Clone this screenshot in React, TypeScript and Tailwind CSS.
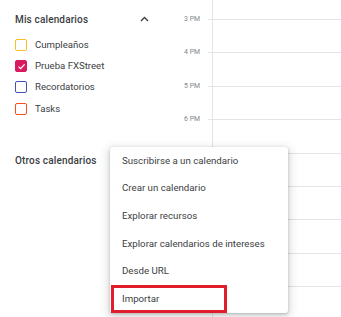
import React from "react";

const calendars = [
  { name: "Cumpleaños", color: "border-[#f6bf26]", checked: false },
  { name: "Prueba FXStreet", color: "border-[#d81b60] bg-[#d81b60]", checked: true },
  { name: "Recordatorios", color: "border-[#3f51b5]", checked: false },
  { name: "Tasks", color: "border-[#f4511e]", checked: false },
];

const hours = ["3 PM", "4 PM", "5 PM", "6 PM", "", "", "", "", ""];

const menuItems = [
  "Suscribirse a un calendario",
  "Crear un calendario",
  "Explorar recursos",
  "Explorar calendarios de intereses",
  "Desde URL",
  "Importar",
];

export default function App() {
  return (
    <div className="relative w-[341px] h-[317px] overflow-hidden bg-white font-['Roboto',sans-serif] text-[#3c4043]">
      <div className="flex h-full">
        {/* Sidebar */}
        <div className="w-[170px] shrink-0 flex flex-col">
          <div className="flex items-center h-[34px] pt-[4px] pl-[15px] pr-[20px]">
            <span className="flex-1 text-[10px] font-medium tracking-[0.15px]">Mis calendarios</span>
            <svg width="9" height="6" viewBox="0 0 9 6" className="mr-[1px]">
              <path d="M1 5 L4.5 1.5 L8 5" fill="none" stroke="#3c4043" strokeWidth="1.4" />
            </svg>
          </div>
          <div className="flex flex-col">
            {calendars.map((c) => (
              <div key={c.name} className="flex items-center h-[21.4px] pl-[15px]">
                <div
                  className={`w-[12px] h-[12px] rounded-[2px] border-[1.5px] flex items-center justify-center ${c.color}`}
                >
                  {c.checked && (
                    <svg width="9" height="9" viewBox="0 0 9 9">
                      <path d="M1.5 4.6 L3.6 6.6 L7.6 2.4" fill="none" stroke="white" strokeWidth="1.3" />
                    </svg>
                  )}
                </div>
                <span className="ml-[8px] text-[9.6px]">{c.name}</span>
              </div>
            ))}
          </div>
          <div className="flex items-center h-[28px] mt-[27.4px] pl-[15px]">
            <span className="text-[10px] font-medium tracking-[0.15px]">Otros calendarios</span>
          </div>
        </div>

        {/* Calendar grid */}
        <div className="flex-1 flex flex-col">
          <div className="flex h-[19px] shrink-0">
            <div className="w-[42px] shrink-0" />
            <div className="flex-1 border-l border-[#e3e4e6]" />
          </div>
          {hours.map((h, i) => (
            <div key={i} className="flex h-[33.4px] shrink-0">
              <div className="w-[38px] shrink-0 pr-[8px] text-right">
                {h && (
                  <span className="block -translate-y-1/2 text-[6.9px] leading-[8px] text-[#80868b]">{h}</span>
                )}
              </div>
              <div className="w-[4px] shrink-0 border-t border-[#e3e4e6]" />
              <div className="flex-1 border-t border-l border-[#e3e4e6]" />
            </div>
          ))}
        </div>
      </div>

      {/* Dropdown menu */}
      <div className="absolute left-[110px] top-[147px] w-[178px] bg-white rounded-[3px] shadow-[0_1px_3px_rgba(60,64,67,0.3),0_3px_8px_3px_rgba(60,64,67,0.15)]">
        {menuItems.map((m) => (
          <div key={m} className="relative flex items-center h-[27.7px] pl-[12px] text-[9.7px] text-[#3c4043]">
            {m}
            {m === "Importar" && (
              <div className="absolute left-[1px] top-[0px] w-[116px] h-[28px] border-[3px] border-[#e11d2b]" />
            )}
          </div>
        ))}
      </div>
    </div>
  );
}
